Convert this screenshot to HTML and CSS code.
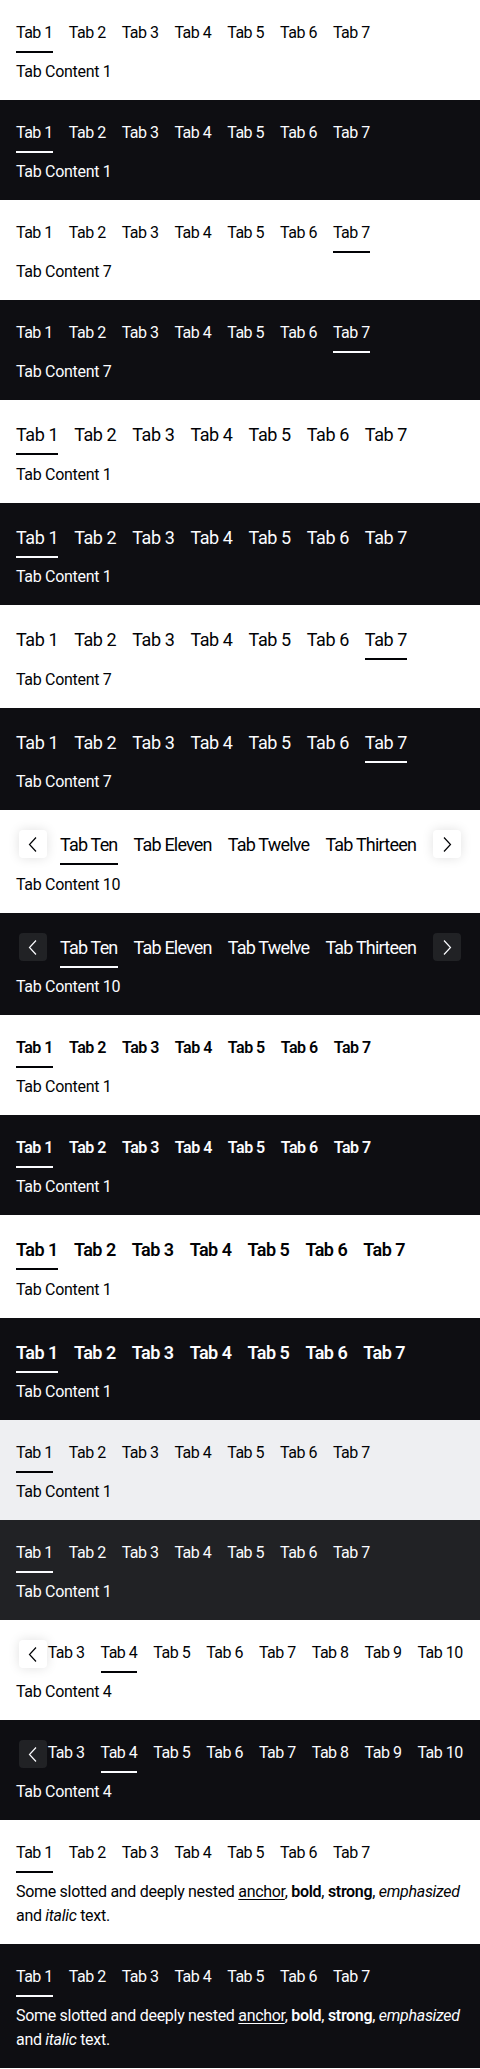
FILE: index.html
```html
<!DOCTYPE html>
<html lang="en">
<head>
<meta charset="utf-8">
<title>Tabs</title>
<link rel="stylesheet" href="styles.css">
</head>
<body>

<section class="demo theme-light">
  <div class="tabs-bar"><button class="tab is-active"><span>Tab 1</span></button><button class="tab"><span>Tab 2</span></button><button class="tab"><span>Tab 3</span></button><button class="tab"><span>Tab 4</span></button><button class="tab"><span>Tab 5</span></button><button class="tab"><span>Tab 6</span></button><button class="tab"><span>Tab 7</span></button></div>
  <div class="panel">Tab Content 1</div>
</section>

<section class="demo theme-dark">
  <div class="tabs-bar"><button class="tab is-active"><span>Tab 1</span></button><button class="tab"><span>Tab 2</span></button><button class="tab"><span>Tab 3</span></button><button class="tab"><span>Tab 4</span></button><button class="tab"><span>Tab 5</span></button><button class="tab"><span>Tab 6</span></button><button class="tab"><span>Tab 7</span></button></div>
  <div class="panel">Tab Content 1</div>
</section>

<section class="demo theme-light">
  <div class="tabs-bar"><button class="tab"><span>Tab 1</span></button><button class="tab"><span>Tab 2</span></button><button class="tab"><span>Tab 3</span></button><button class="tab"><span>Tab 4</span></button><button class="tab"><span>Tab 5</span></button><button class="tab"><span>Tab 6</span></button><button class="tab is-active"><span>Tab 7</span></button></div>
  <div class="panel">Tab Content 7</div>
</section>

<section class="demo theme-dark">
  <div class="tabs-bar"><button class="tab"><span>Tab 1</span></button><button class="tab"><span>Tab 2</span></button><button class="tab"><span>Tab 3</span></button><button class="tab"><span>Tab 4</span></button><button class="tab"><span>Tab 5</span></button><button class="tab"><span>Tab 6</span></button><button class="tab is-active"><span>Tab 7</span></button></div>
  <div class="panel">Tab Content 7</div>
</section>

<section class="demo theme-light size-medium">
  <div class="tabs-bar"><button class="tab is-active"><span>Tab 1</span></button><button class="tab"><span>Tab 2</span></button><button class="tab"><span>Tab 3</span></button><button class="tab"><span>Tab 4</span></button><button class="tab"><span>Tab 5</span></button><button class="tab"><span>Tab 6</span></button><button class="tab"><span>Tab 7</span></button></div>
  <div class="panel">Tab Content 1</div>
</section>

<section class="demo theme-dark size-medium">
  <div class="tabs-bar"><button class="tab is-active"><span>Tab 1</span></button><button class="tab"><span>Tab 2</span></button><button class="tab"><span>Tab 3</span></button><button class="tab"><span>Tab 4</span></button><button class="tab"><span>Tab 5</span></button><button class="tab"><span>Tab 6</span></button><button class="tab"><span>Tab 7</span></button></div>
  <div class="panel">Tab Content 1</div>
</section>

<section class="demo theme-light size-medium">
  <div class="tabs-bar"><button class="tab"><span>Tab 1</span></button><button class="tab"><span>Tab 2</span></button><button class="tab"><span>Tab 3</span></button><button class="tab"><span>Tab 4</span></button><button class="tab"><span>Tab 5</span></button><button class="tab"><span>Tab 6</span></button><button class="tab is-active"><span>Tab 7</span></button></div>
  <div class="panel">Tab Content 7</div>
</section>

<section class="demo theme-dark size-medium">
  <div class="tabs-bar"><button class="tab"><span>Tab 1</span></button><button class="tab"><span>Tab 2</span></button><button class="tab"><span>Tab 3</span></button><button class="tab"><span>Tab 4</span></button><button class="tab"><span>Tab 5</span></button><button class="tab"><span>Tab 6</span></button><button class="tab is-active"><span>Tab 7</span></button></div>
  <div class="panel">Tab Content 7</div>
</section>

<section class="demo theme-light size-medium">
  <div class="scroll-area">
    <div class="scroller scrolled-both">
      <div class="tabs-bar"><button class="tab is-active"><span>Tab Ten</span></button><button class="tab"><span>Tab Eleven</span></button><button class="tab"><span>Tab Twelve</span></button><button class="tab"><span>Tab Thirteen</span></button></div>
    </div>
    <button class="scroll-btn scroll-prev" aria-label="Previous"><svg viewBox="0 0 28 28" width="28" height="28"><path d="M17 7.5 10.5 14.5 17 21.5" /></svg></button>
    <button class="scroll-btn scroll-next" aria-label="Next"><svg viewBox="0 0 28 28" width="28" height="28"><path d="M11 7.5 17.5 14.5 11 21.5" /></svg></button>
  </div>
  <div class="panel">Tab Content 10</div>
</section>

<section class="demo theme-dark size-medium">
  <div class="scroll-area">
    <div class="scroller scrolled-both">
      <div class="tabs-bar"><button class="tab is-active"><span>Tab Ten</span></button><button class="tab"><span>Tab Eleven</span></button><button class="tab"><span>Tab Twelve</span></button><button class="tab"><span>Tab Thirteen</span></button></div>
    </div>
    <button class="scroll-btn scroll-prev" aria-label="Previous"><svg viewBox="0 0 28 28" width="28" height="28"><path d="M17 7.5 10.5 14.5 17 21.5" /></svg></button>
    <button class="scroll-btn scroll-next" aria-label="Next"><svg viewBox="0 0 28 28" width="28" height="28"><path d="M11 7.5 17.5 14.5 11 21.5" /></svg></button>
  </div>
  <div class="panel">Tab Content 10</div>
</section>

<section class="demo theme-light weight-semibold">
  <div class="tabs-bar"><button class="tab is-active"><span>Tab 1</span></button><button class="tab"><span>Tab 2</span></button><button class="tab"><span>Tab 3</span></button><button class="tab"><span>Tab 4</span></button><button class="tab"><span>Tab 5</span></button><button class="tab"><span>Tab 6</span></button><button class="tab"><span>Tab 7</span></button></div>
  <div class="panel">Tab Content 1</div>
</section>

<section class="demo theme-dark weight-semibold">
  <div class="tabs-bar"><button class="tab is-active"><span>Tab 1</span></button><button class="tab"><span>Tab 2</span></button><button class="tab"><span>Tab 3</span></button><button class="tab"><span>Tab 4</span></button><button class="tab"><span>Tab 5</span></button><button class="tab"><span>Tab 6</span></button><button class="tab"><span>Tab 7</span></button></div>
  <div class="panel">Tab Content 1</div>
</section>

<section class="demo theme-light size-medium weight-semibold">
  <div class="tabs-bar"><button class="tab is-active"><span>Tab 1</span></button><button class="tab"><span>Tab 2</span></button><button class="tab"><span>Tab 3</span></button><button class="tab"><span>Tab 4</span></button><button class="tab"><span>Tab 5</span></button><button class="tab"><span>Tab 6</span></button><button class="tab"><span>Tab 7</span></button></div>
  <div class="panel">Tab Content 1</div>
</section>

<section class="demo theme-dark size-medium weight-semibold">
  <div class="tabs-bar"><button class="tab is-active"><span>Tab 1</span></button><button class="tab"><span>Tab 2</span></button><button class="tab"><span>Tab 3</span></button><button class="tab"><span>Tab 4</span></button><button class="tab"><span>Tab 5</span></button><button class="tab"><span>Tab 6</span></button><button class="tab"><span>Tab 7</span></button></div>
  <div class="panel">Tab Content 1</div>
</section>

<section class="demo theme-light-surface">
  <div class="tabs-bar"><button class="tab is-active"><span>Tab 1</span></button><button class="tab"><span>Tab 2</span></button><button class="tab"><span>Tab 3</span></button><button class="tab"><span>Tab 4</span></button><button class="tab"><span>Tab 5</span></button><button class="tab"><span>Tab 6</span></button><button class="tab"><span>Tab 7</span></button></div>
  <div class="panel">Tab Content 1</div>
</section>

<section class="demo theme-dark-surface">
  <div class="tabs-bar"><button class="tab is-active"><span>Tab 1</span></button><button class="tab"><span>Tab 2</span></button><button class="tab"><span>Tab 3</span></button><button class="tab"><span>Tab 4</span></button><button class="tab"><span>Tab 5</span></button><button class="tab"><span>Tab 6</span></button><button class="tab"><span>Tab 7</span></button></div>
  <div class="panel">Tab Content 1</div>
</section>

<section class="demo theme-light">
  <div class="scroll-area">
    <div class="scroller scrolled-end">
      <div class="tabs-bar"><button class="tab"><span>Tab 3</span></button><button class="tab is-active"><span>Tab 4</span></button><button class="tab"><span>Tab 5</span></button><button class="tab"><span>Tab 6</span></button><button class="tab"><span>Tab 7</span></button><button class="tab"><span>Tab 8</span></button><button class="tab"><span>Tab 9</span></button><button class="tab"><span>Tab 10</span></button></div>
    </div>
    <button class="scroll-btn scroll-prev" aria-label="Previous"><svg viewBox="0 0 28 28" width="28" height="28"><path d="M17 7.5 10.5 14.5 17 21.5" /></svg></button>
  </div>
  <div class="panel">Tab Content 4</div>
</section>

<section class="demo theme-dark">
  <div class="scroll-area">
    <div class="scroller scrolled-end">
      <div class="tabs-bar"><button class="tab"><span>Tab 3</span></button><button class="tab is-active"><span>Tab 4</span></button><button class="tab"><span>Tab 5</span></button><button class="tab"><span>Tab 6</span></button><button class="tab"><span>Tab 7</span></button><button class="tab"><span>Tab 8</span></button><button class="tab"><span>Tab 9</span></button><button class="tab"><span>Tab 10</span></button></div>
    </div>
    <button class="scroll-btn scroll-prev" aria-label="Previous"><svg viewBox="0 0 28 28" width="28" height="28"><path d="M17 7.5 10.5 14.5 17 21.5" /></svg></button>
  </div>
  <div class="panel">Tab Content 4</div>
</section>

<section class="demo theme-light">
  <div class="tabs-bar"><button class="tab is-active"><span>Tab 1</span></button><button class="tab"><span>Tab 2</span></button><button class="tab"><span>Tab 3</span></button><button class="tab"><span>Tab 4</span></button><button class="tab"><span>Tab 5</span></button><button class="tab"><span>Tab 6</span></button><button class="tab"><span>Tab 7</span></button></div>
  <div class="panel">Some slotted and deeply nested <a href="#">anchor</a>, <b>bold</b>, <strong>strong</strong>, <em>emphasized</em> and <i>italic</i> text.</div>
</section>

<section class="demo theme-dark">
  <div class="tabs-bar"><button class="tab is-active"><span>Tab 1</span></button><button class="tab"><span>Tab 2</span></button><button class="tab"><span>Tab 3</span></button><button class="tab"><span>Tab 4</span></button><button class="tab"><span>Tab 5</span></button><button class="tab"><span>Tab 6</span></button><button class="tab"><span>Tab 7</span></button></div>
  <div class="panel">Some slotted and deeply nested <a href="#">anchor</a>, <b>bold</b>, <strong>strong</strong>, <em>emphasized</em> and <i>italic</i> text.</div>
</section>

</body>
</html>
```

FILE: styles.css
```css
* {
  box-sizing: border-box;
}

body {
  margin: 0;
  font-family: Roboto, "Noto Sans", "Liberation Sans", sans-serif;
  -webkit-font-smoothing: antialiased;
}

.demo {
  --bg: #ffffff;
  --fg: #010205;
  --btn-bg: #ffffff;
  --btn-shadow: 0 0 12px rgba(0, 0, 0, 0.12);
  padding: 16px;
  background: var(--bg);
  color: var(--fg);
}

.theme-light {
  --bg: #ffffff;
  --fg: #010205;
}

.theme-dark {
  --bg: #0e0e12;
  --fg: #fbfcff;
  --btn-bg: #212225;
  --btn-shadow: none;
}

.theme-light-surface {
  --bg: #eeeff2;
  --fg: #010205;
}

.theme-dark-surface {
  --bg: #212225;
  --fg: #fbfcff;
  --btn-bg: #2f3033;
  --btn-shadow: none;
}

.tabs-bar {
  display: flex;
  gap: 16px;
  white-space: nowrap;
}

.tab {
  appearance: none;
  flex: 0 0 auto;
  display: flex;
  flex-direction: column;
  align-items: stretch;
  margin: 0;
  padding: 5px 0 0;
  border: 0;
  background: none;
  color: inherit;
  font-family: inherit;
  font-size: 16px;
  font-weight: 400;
  line-height: 24px;
  letter-spacing: -0.5px;
  text-align: left;
  cursor: pointer;
}

.tab::after {
  content: "";
  display: block;
  height: 2px;
  margin-top: 6px;
  background: transparent;
}

.tab.is-active::after {
  background: currentColor;
}

.size-medium .tab {
  font-size: 18px;
  line-height: 27px;
  letter-spacing: -0.42px;
}

.size-medium .tab::after {
  margin-top: 5px;
}

.weight-semibold .tab {
  font-weight: 600;
  letter-spacing: -0.5px;
}

.size-medium.weight-semibold .tab {
  letter-spacing: -0.5px;
}

.panel {
  margin-top: 7px;
  font-size: 16px;
  line-height: 24px;
  letter-spacing: -0.3px;
}

.size-medium .panel {
  margin-top: 7.5px;
}

.panel a {
  color: inherit;
  text-decoration: underline;
  text-underline-offset: 2px;
  text-decoration-thickness: 1px;
}

.panel b,
.panel strong {
  font-weight: 600;
}

/* scrollable tabs */
.scroll-area {
  position: relative;
}

.scroller {
  overflow: hidden;
}

.scrolled-both .tabs-bar {
  padding-left: 44px;
}

.scrolled-both .tab {
  letter-spacing: -0.8px;
}

.scrolled-end .tabs-bar {
  padding-left: 31.7px;
}

.scroll-btn {
  position: absolute;
  top: 4px;
  width: 28px;
  height: 28px;
  padding: 0;
  border: 0;
  border-radius: 4px;
  display: grid;
  place-items: center;
  background: var(--btn-bg);
  box-shadow: var(--btn-shadow);
  color: var(--fg);
  cursor: pointer;
}

.scroll-btn svg {
  display: block;
  fill: none;
  stroke: currentColor;
  stroke-width: 1.2;
}

.scroll-prev {
  left: 3px;
}

.scroll-next {
  right: 3px;
}
```
